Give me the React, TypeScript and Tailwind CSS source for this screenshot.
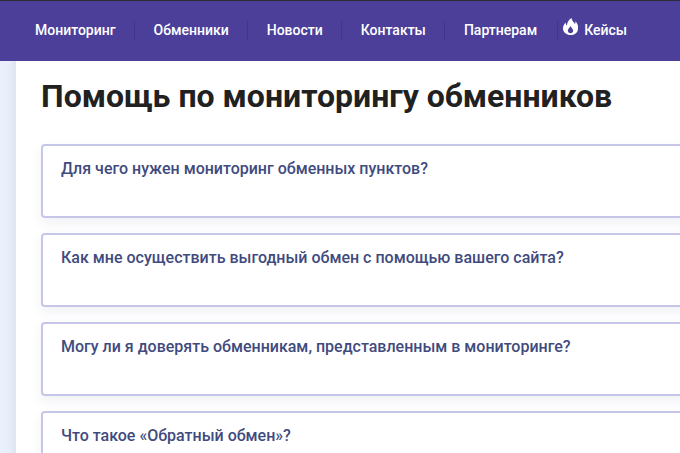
const items = ["Мониторинг", "Обменники", "Новости", "Контакты"];
const faqs = [
  "Для чего нужен мониторинг обменных пунктов?",
  "Как мне осуществить выгодный обмен с помощью вашего сайта?",
  "Могу ли я доверять обменникам, представленным в мониторинге?",
  "Что такое «Обратный обмен»?",
];

function Flame() {
  return (
    <svg viewBox="0 0 15 17" className="w-[15px] h-[17px] mb-[9px] mr-[6px] shrink-0" fill="white" fillRule="evenodd">
      <path d="M8.5 0C9 3 11 4 12 6C12.5 5 12.5 4 12.3 3.2C14.5 5 15.5 8 15 11C14.5 15 11.5 17 7.5 17C3.5 17 .5 14.5 0 11C-.3 8 1.5 6 2.5 4.5C2.8 6 3.2 7 4 7.5C4 4.5 5.5 2 8.5 0ZM7.5 15.2C6 15.2 4.8 14 4.8 12.5C4.8 11 6.5 10 7.5 8C8.3 10 10.2 11 10.2 12.7C10.2 14.2 9 15.2 7.5 15.2Z" />
    </svg>
  );
}

export default function App() {
  return (
    <div className="w-[680px] h-[453px] overflow-hidden bg-white font-['Roboto',sans-serif] flex flex-col">
      <header className="h-[61px] shrink-0 bg-[#4b3f9a] border-t border-t-[#2b2b33] flex items-start pl-[16px] pt-[20px]">
        {items.map((t) => (
          <div key={t} className="h-[20px] flex items-center pl-[19px] pr-[18px] border-r border-r-[#40358a] text-[14px] font-medium text-white whitespace-nowrap">
            <span className="leading-[17px] mb-[2px]">{t}</span>
          </div>
        ))}
        <div className="h-[20px] flex items-center pl-[19px] pr-[20px] border-r border-r-[#40358a] text-[14px] font-medium text-white whitespace-nowrap">
          <span className="leading-[17px] mb-[2px]">Партнерам</span>
        </div>
        <div className="h-[20px] flex items-center pl-[5px] text-[14px] font-medium text-white whitespace-nowrap">
          <Flame />
          <span className="leading-[17px] mb-[2px]">Кейсы</span>
        </div>
      </header>
      <div className="flex flex-1 min-h-0">
        <div className="w-[16px] shrink-0 bg-gradient-to-r from-[#ebf1fc] via-[#e8eefa] to-[#dfe4f1]" />
        <main className="flex-1 min-w-0 pl-[25px]">
          <h1 className="mt-[16px] mb-[29px] text-[32px] leading-[38px] font-bold text-[#212121] whitespace-nowrap">
            Помощь по мониторингу обменников
          </h1>
          <div className="flex flex-col gap-[15px] w-[680px]">
            {faqs.map((q) => (
              <div key={q} className="h-[74px] shrink-0 rounded-[4px] border-2 border-[#c6c6e9] bg-white shadow-[0_5px_12px_rgba(70,80,140,0.08)] pl-[18px] pt-[13px] text-[16px] leading-[19px] font-medium text-[#3f4b7e]">
                {q}
              </div>
            ))}
          </div>
        </main>
      </div>
    </div>
  );
}
